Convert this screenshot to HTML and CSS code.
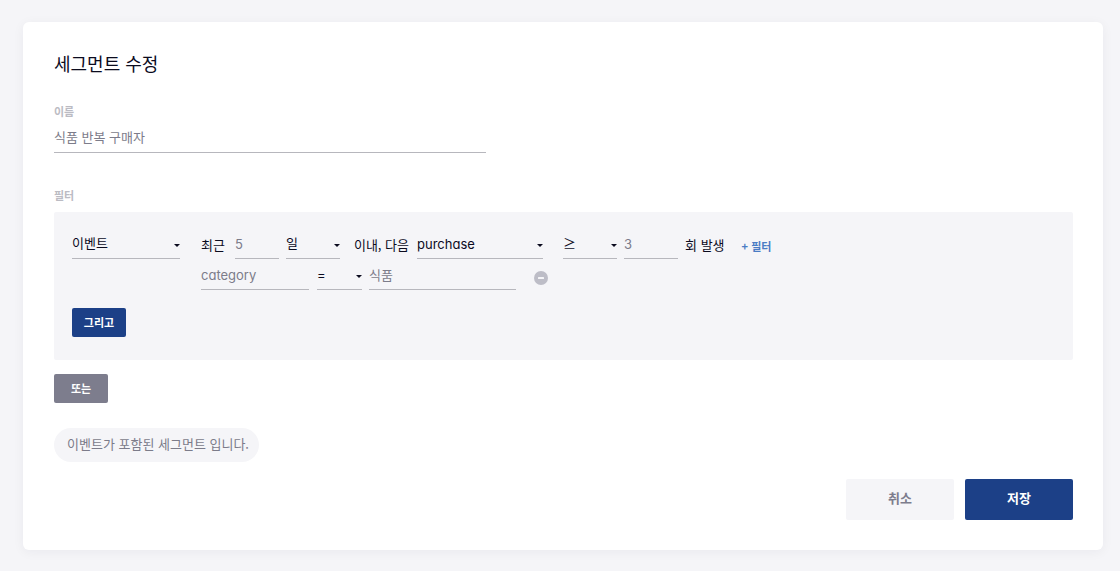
FILE: index.html
```html
<!DOCTYPE html>
<html lang="ko">
<head>
<meta charset="UTF-8">
<meta name="viewport" content="width=device-width, initial-scale=1.0">
<title>세그먼트 수정</title>
<link rel="stylesheet" href="styles.css">
</head>
<body>

<form class="card">
  <h1 class="title">세그먼트 수정</h1>

  <label class="label" for="name">이름</label>
  <input class="field name" id="name" type="text" value="식품 반복 구매자">

  <h2 class="label filter-label">필터</h2>
  <div class="filter-box">
    <div class="rule">
      <div class="select rule-type">
        <select class="field" aria-label="필터 종류"><option>이벤트</option></select>
      </div>
      <div class="conditions">
        <div class="row">
          <label class="word" for="period">최근</label>
          <input class="field latin period" id="period" type="text" value="5">
          <div class="select unit">
            <select class="field" aria-label="기간 단위"><option>일</option></select>
          </div>
          <span class="word within">이내, 다음</span>
          <div class="select event">
            <select class="field latin" aria-label="이벤트 이름"><option>purchase</option></select>
          </div>
          <div class="select compare">
            <select class="field" aria-label="횟수 비교"><option>≥</option></select>
          </div>
          <input class="field latin count" id="count" type="text" value="3">
          <label class="word" for="count">회 발생</label>
          <button class="add-filter" type="button">+ 필터</button>
        </div>
        <div class="row">
          <input class="field latin property" type="text" value="category" aria-label="속성">
          <div class="select operator">
            <select class="field latin" aria-label="속성 비교"><option>=</option></select>
          </div>
          <input class="field value" type="text" value="식품" aria-label="값">
          <button class="remove" type="button" aria-label="삭제">
            <svg width="14" height="14" viewBox="0 0 14 14">
              <circle cx="7" cy="7" r="7" fill="#bdbdc7"/>
              <rect x="4" y="6" width="6" height="2" rx="0.5" fill="#f5f5f8"/>
            </svg>
          </button>
        </div>
      </div>
    </div>
    <button class="small-button and" type="button">그리고</button>
  </div>
  <button class="small-button or" type="button">또는</button>

  <p class="summary">이벤트가 포함된 세그먼트 입니다.</p>

  <div class="actions">
    <button class="button cancel" type="button">취소</button>
    <button class="button save" type="submit">저장</button>
  </div>
</form>

</body>
</html>
```

FILE: styles.css
```css
* {
  box-sizing: border-box;
}

body {
  margin: 0;
  padding: 22px 17px 21px 23px;
  background-color: #f5f5f8;
  color: #0b0b1e;
  font-family: "Noto Sans CJK KR", sans-serif;
  font-size: 13px;
  line-height: 20px;
}

button,
input,
select {
  margin: 0;
  padding: 0;
  border: none;
  font: inherit;
}

button {
  cursor: pointer;
}

.card {
  padding: 27px 30px 30px 31px;
  background-color: #fff;
  border-radius: 6px;
  box-shadow: 0 2px 12px rgba(20, 20, 60, 0.05);
}

.title {
  margin: 0 0 26px;
  font-size: 18px;
  font-weight: 400;
  line-height: 28px;
}

.label {
  display: block;
  margin: 0;
  color: #bbbbc3;
  font-size: 11px;
  font-weight: 700;
  line-height: 16px;
}

.field {
  display: block;
  height: 31px;
  background-color: transparent;
  border-bottom: 1px solid #b7b7bd;
  border-radius: 0;
  color: #7c7c8a;
  outline: none;
}

.latin {
  padding-top: 2px;
  font-family: Inter, "Noto Sans CJK KR", sans-serif;
  font-feature-settings: "cv11";
}

.name {
  width: 432px;
  max-width: 100%;
  margin-top: 3px;
  padding-bottom: 2px;
}

.filter-label {
  margin-top: 34px;
}

.filter-box {
  margin-top: 9px;
  padding: 16px 18px 23px;
  background-color: #f5f5f8;
  border-radius: 2px;
}

.rule {
  display: flex;
  gap: 21px;
}

.row {
  display: flex;
  flex-wrap: wrap;
  align-items: center;
  column-gap: 7px;
}

.select {
  position: relative;
}

.select select {
  width: 100%;
  color: #0b0b1e;
  appearance: none;
}

.select::after {
  content: "";
  position: absolute;
  top: 16px;
  right: 0;
  border: 3px solid transparent;
  border-top-color: #0b0b1e;
  border-bottom: none;
  pointer-events: none;
}

.rule-type {
  width: 108px;
}

.word {
  margin-right: 3px;
  padding-top: 3px;
}

.within {
  margin: 0 1px 0 7px;
}

.period {
  width: 44px;
}

.unit,
.compare,
.count {
  width: 54px;
}

.event {
  width: 126px;
  margin-right: 13px;
}

.property {
  width: 108px;
  margin-right: 1px;
}

.operator {
  width: 45px;
}

.value {
  width: 147px;
}

.add-filter {
  margin-left: 7px;
  padding-top: 5px;
  background-color: transparent;
  color: #4a7cc4;
  font-size: 11px;
  font-weight: 700;
}

.remove {
  margin-left: 11px;
  padding-top: 6px;
  background-color: transparent;
}

.remove svg {
  display: block;
}

.small-button {
  display: block;
  width: 54px;
  height: 29px;
  padding-bottom: 2px;
  border-radius: 2px;
  color: #fff;
  font-size: 11px;
  font-weight: 700;
}

.and {
  margin-top: 18px;
  background-color: #1c4087;
}

.or {
  margin-top: 14px;
  background-color: #7d7d8d;
}

.summary {
  width: fit-content;
  margin: 25px 0 0;
  padding: 6px 10px 8px 13px;
  background-color: #f5f5f8;
  border-radius: 17px;
  color: #7c7c8a;
}

.actions {
  display: flex;
  justify-content: flex-end;
  gap: 11px;
  margin-top: 17px;
}

.button {
  width: 108px;
  height: 41px;
  padding-bottom: 3px;
  border-radius: 2px;
  font-weight: 700;
}

.cancel {
  background-color: #f5f5f8;
  color: #7d7d8d;
}

.save {
  background-color: #1c4087;
  color: #fff;
}
```
